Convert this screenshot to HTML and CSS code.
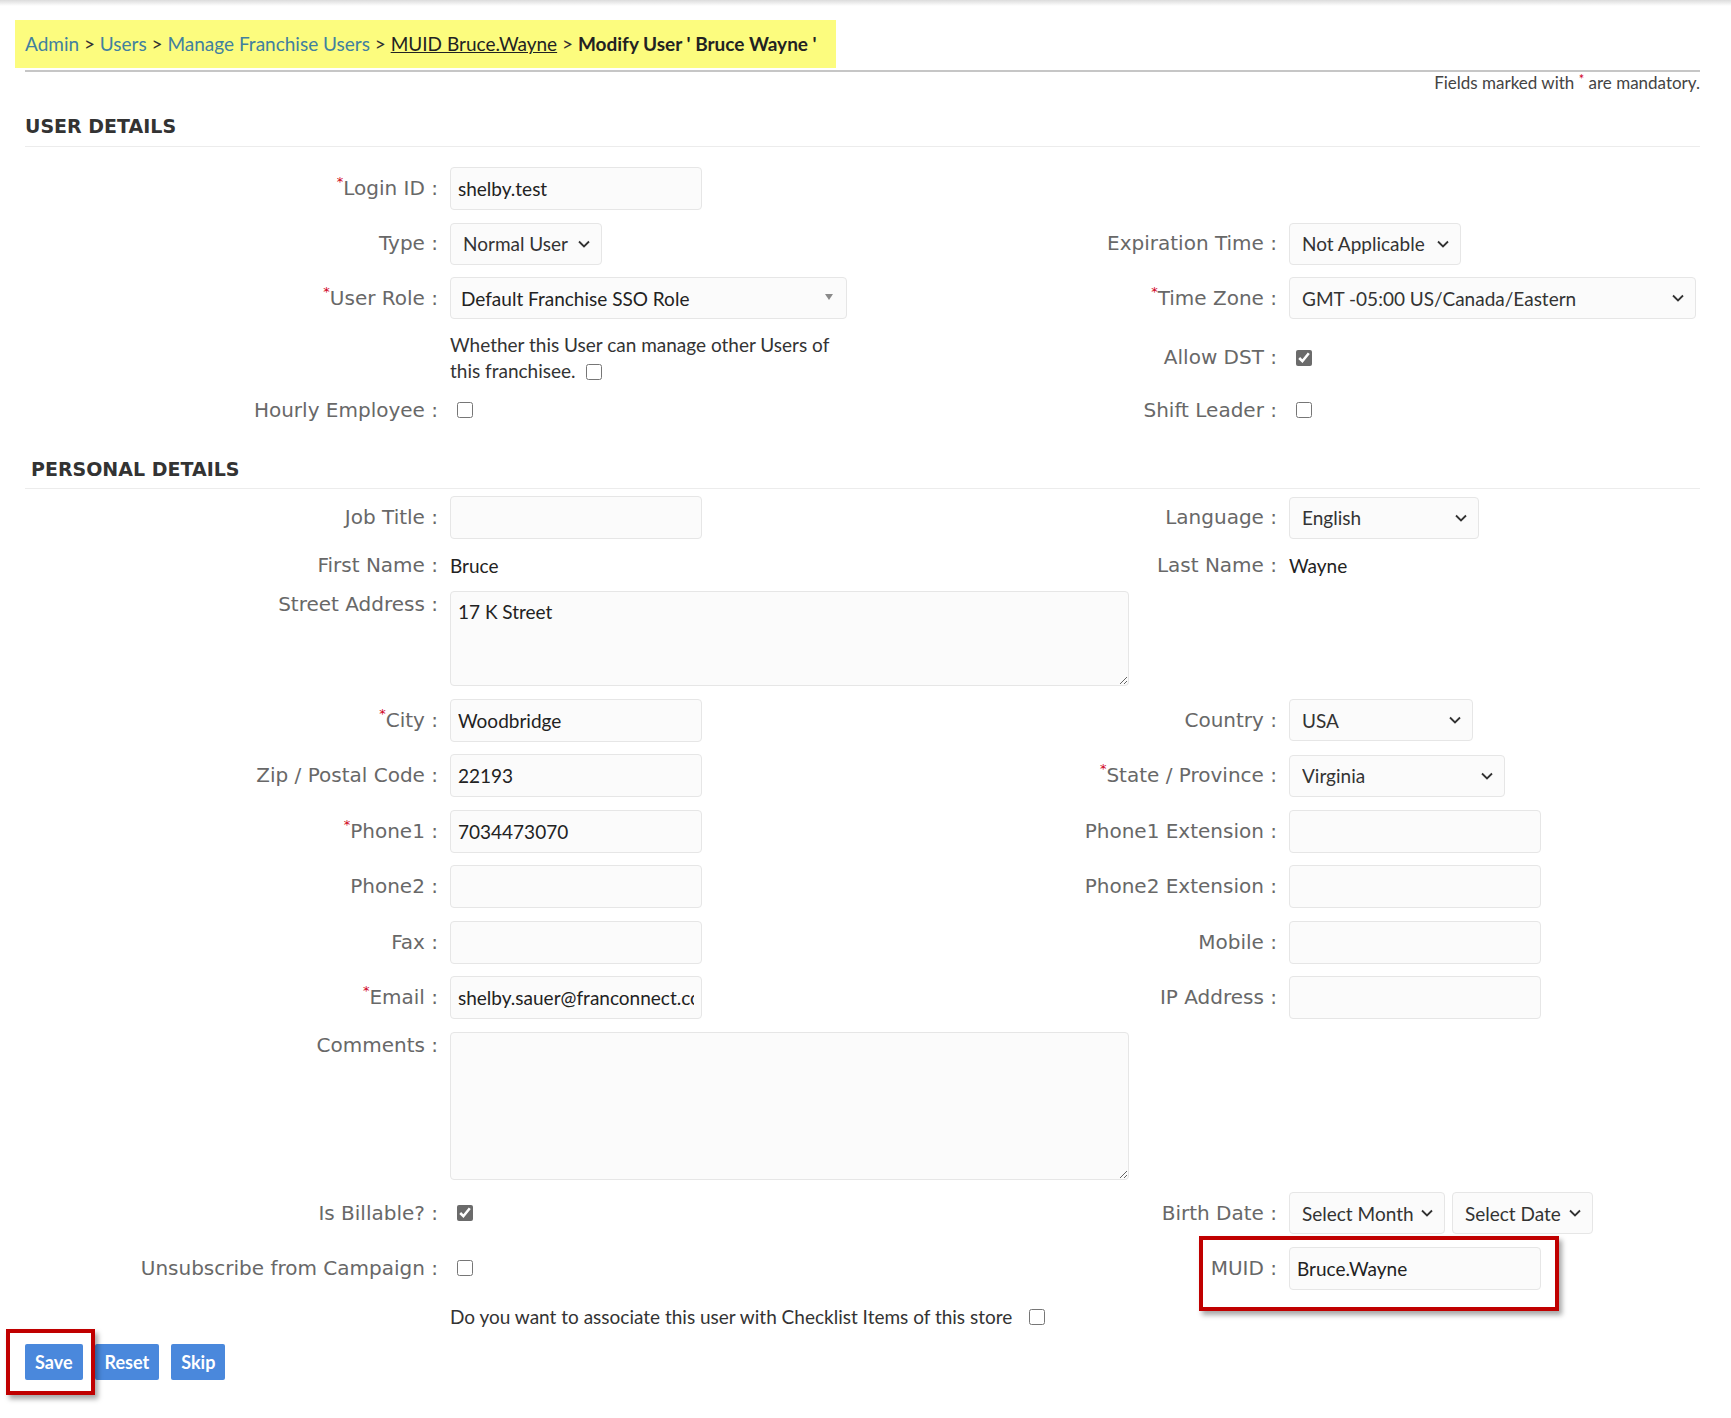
FILE: index.html
```html
<!DOCTYPE html>
<html lang="en">
<head>
<meta charset="UTF-8">
<meta name="viewport" content="width=device-width, initial-scale=1.0">
<title>Modify User</title>
<link rel="stylesheet" href="styles.css">
</head>
<body>
<div class="top-shade"></div>

<div class="breadcrumb">
    <a href="#">Admin</a> &gt; <a href="#">Users</a> &gt; <a href="#">Manage Franchise Users</a> &gt;
    <a href="#" class="muid-link">MUID Bruce.Wayne</a> &gt; <b>Modify User ' Bruce Wayne '</b>
</div>
<div class="crumb-rule"></div>
<p class="mandatory">Fields marked with <span class="req">*</span> are mandatory.</p>

<h3 class="section-title">USER DETAILS</h3>
<div class="form-grid user-grid">
    <label class="lbl first"><span class="req">*</span>Login ID :</label>
    <div class="field"><input type="text" class="txt" value="shelby.test"></div>

    <label class="lbl first">Type :</label>
    <div class="field"><select class="sel w-type"><option>Normal User</option></select></div>
    <label class="lbl">Expiration Time :</label>
    <div class="field"><select class="sel w-exp"><option>Not Applicable</option></select></div>

    <label class="lbl first"><span class="req">*</span>User Role :</label>
    <div class="field">
        <span class="chosen">
            <select class="sel plain w-role"><option>Default Franchise SSO Role</option></select>
            <svg class="tri" width="8" height="6" viewBox="0 0 8 6"><path d="M0 0 L8 0 L4 6 Z" fill="#8a8a8a"/></svg>
        </span>
    </div>
    <label class="lbl"><span class="req">*</span>Time Zone :</label>
    <div class="field"><select class="sel w-tz"><option>GMT -05:00 US/Canada/Eastern</option></select></div>

    <div class="note">Whether this User can manage other Users of<br>this franchisee. <input type="checkbox" class="cb"></div>
    <label class="lbl">Allow DST :</label>
    <div class="field"><input type="checkbox" class="cb" checked></div>

    <label class="lbl first short">Hourly Employee :</label>
    <div class="field"><input type="checkbox" class="cb"></div>
    <label class="lbl short">Shift Leader :</label>
    <div class="field"><input type="checkbox" class="cb"></div>
</div>

<h3 class="section-title personal">PERSONAL DETAILS</h3>
<div class="form-grid personal-grid">
    <label class="lbl first">Job Title :</label>
    <div class="field"><input type="text" class="txt" value=""></div>
    <label class="lbl">Language :</label>
    <div class="field"><select class="sel w-lang"><option>English</option></select></div>

    <label class="lbl first">First Name :</label>
    <div class="value">Bruce</div>
    <label class="lbl">Last Name :</label>
    <div class="value">Wayne</div>

    <label class="lbl first top">Street Address :</label>
    <div class="field span2"><textarea class="area street">17 K Street</textarea></div>

    <label class="lbl first"><span class="req">*</span>City :</label>
    <div class="field"><input type="text" class="txt" value="Woodbridge"></div>
    <label class="lbl">Country :</label>
    <div class="field"><select class="sel w-country"><option>USA</option></select></div>

    <label class="lbl first">Zip / Postal Code :</label>
    <div class="field"><input type="text" class="txt" value="22193"></div>
    <label class="lbl"><span class="req">*</span>State / Province :</label>
    <div class="field"><select class="sel w-state"><option>Virginia</option></select></div>

    <label class="lbl first"><span class="req">*</span>Phone1 :</label>
    <div class="field"><input type="text" class="txt" value="7034473070"></div>
    <label class="lbl">Phone1 Extension :</label>
    <div class="field"><input type="text" class="txt" value=""></div>

    <label class="lbl first">Phone2 :</label>
    <div class="field"><input type="text" class="txt" value=""></div>
    <label class="lbl">Phone2 Extension :</label>
    <div class="field"><input type="text" class="txt" value=""></div>

    <label class="lbl first">Fax :</label>
    <div class="field"><input type="text" class="txt" value=""></div>
    <label class="lbl">Mobile :</label>
    <div class="field"><input type="text" class="txt" value=""></div>

    <label class="lbl first"><span class="req">*</span>Email :</label>
    <div class="field"><input type="text" class="txt" value="shelby.sauer@franconnect.com"></div>
    <label class="lbl">IP Address :</label>
    <div class="field"><input type="text" class="txt" value=""></div>

    <label class="lbl first top">Comments :</label>
    <div class="field span2"><textarea class="area comments"></textarea></div>

    <label class="lbl first">Is Billable? :</label>
    <div class="field"><input type="checkbox" class="cb" checked></div>
    <label class="lbl">Birth Date :</label>
    <div class="field dates">
        <select class="sel w-month"><option>Select Month</option></select>
        <select class="sel w-date"><option>Select Date</option></select>
    </div>

    <label class="lbl first">Unsubscribe from Campaign :</label>
    <div class="field"><input type="checkbox" class="cb"></div>
    <label class="lbl">MUID :</label>
    <div class="field muid">
        <input type="text" class="txt" value="Bruce.Wayne">
        <div class="callout muid-callout"></div>
    </div>

    <div class="checklist">Do you want to associate this user with Checklist Items of this store <input type="checkbox" class="cb"></div>
</div>

<div class="actions">
    <div class="callout save-callout"></div>
    <button class="btn">Save</button>
    <button class="btn">Reset</button>
    <button class="btn">Skip</button>
</div>
</body>
</html>
```

FILE: styles.css
```css
body {
    margin: 0;
    padding-bottom: 40px;
    background: #fff;
    font-family: Lato, "Liberation Sans", sans-serif;
    color: #222;
}
.top-shade {
    height: 6px;
    background: linear-gradient(#dcdcdc, #fff);
}

/* breadcrumb */
.breadcrumb {
    display: inline-block;
    margin: 14px 0 0 15px;
    padding: 0 19px 0 10px;
    height: 48px;
    line-height: 48px;
    background: #fcfc7e;
    font-size: 19px;
    color: #333;
}
.breadcrumb a {
    color: #41809f;
    text-decoration: none;
}
.breadcrumb a.muid-link {
    color: #222;
    text-decoration: underline;
}
.breadcrumb b {
    color: #222;
}
.crumb-rule {
    margin: 2px 31px 0 25px;
    border-top: 2px solid #c6c6c6;
}
.mandatory {
    margin: 1px 31px 0 0;
    text-align: right;
    font-size: 17px;
    line-height: 20px;
    color: #444;
}
.req {
    color: #d0021b;
    font-size: 13px;
    vertical-align: top;
    line-height: 1;
}

/* sections */
.section-title {
    margin: 21px 31px 0 25px;
    padding-bottom: 8px;
    border-bottom: 1px solid #ececec;
    font-family: "DejaVu Sans", sans-serif;
    font-size: 19px;
    line-height: 24px;
    font-weight: 700;
    color: #333;
}
.section-title.personal {
    margin-top: 33px;
    padding-left: 6px;
    padding-bottom: 7px;
}

.form-grid {
    display: grid;
    grid-template-columns: 413px 415px 400px 1fr;
    column-gap: 12px;
    row-gap: 12.5px;
    align-items: center;
    margin: 20px 31px 0 25px;
}
.personal-grid {
    margin-top: 7px;
}
.lbl {
    text-align: right;
    font-family: "DejaVu Sans", sans-serif;
    font-size: 20px;
    line-height: 27px;
    color: #686868;
    white-space: nowrap;
}
.lbl.first {
    grid-column: 1;
}
.lbl.short {
    line-height: 28px;
}
.lbl.top {
    align-self: start;
}
.field {
    display: flex;
    align-items: center;
}
.span2 {
    grid-column: span 2;
}
.value {
    font-size: 19px;
    line-height: 27px;
    color: #222;
}
.note {
    grid-column: 2;
    font-size: 19px;
    line-height: 26px;
    color: #333;
}
.note .cb {
    margin-left: 6px;
    vertical-align: -2px;
}
.checklist {
    grid-column: 2 / 5;
    font-size: 19px;
    line-height: 29px;
    color: #333;
}
.checklist .cb {
    margin-left: 12px;
    vertical-align: -1px;
}

/* controls */
.txt, .sel, .area {
    box-sizing: border-box;
    background-color: #fbfbfb;
    border: 1px solid #e6e6e6;
    border-radius: 4px;
    font-family: Lato, "Liberation Sans", sans-serif;
    font-size: 19px;
    color: #222;
}
.txt {
    width: 252px;
    height: 43px;
    padding: 0 7px;
}
.sel {
    height: 42px;
    padding: 0 30px 0 12px;
    appearance: none;
    color: #333;
    background-image: url("data:image/svg+xml,%3Csvg xmlns='http://www.w3.org/2000/svg' width='12' height='8' viewBox='0 0 12 8'%3E%3Cpath d='M1 1.5 L6 6.5 L11 1.5' fill='none' stroke='%23333' stroke-width='1.8'/%3E%3C/svg%3E");
    background-repeat: no-repeat;
    background-position: right 11px center;
}
.area {
    width: 679px;
    padding: 8px 7px;
    resize: vertical;
}
.area.street {
    height: 95px;
}
.area.comments {
    height: 148px;
}
.w-type { width: 152px; }
.w-exp { width: 172px; }
.w-role { width: 397px; }
.w-tz { width: 407px; }
.w-lang { width: 190px; }
.w-country { width: 184px; }
.w-state { width: 216px; }
.w-month { width: 156px; }
.w-date { width: 141px; }
.dates {
    gap: 7px;
}
.chosen {
    position: relative;
    display: inline-block;
}
.sel.plain {
    background-image: none;
    padding-left: 10px;
    color: #222;
}
.chosen .tri {
    position: absolute;
    right: 14px;
    top: 17px;
}
.cb {
    width: 16px;
    height: 16px;
    margin: 0 0 0 7px;
    accent-color: #6b6b6b;
}

/* annotations */
.muid {
    position: relative;
}
.callout {
    position: absolute;
    box-sizing: border-box;
    border: 4px solid #c00000;
    box-shadow: 3px 4px 5px rgba(0,0,0,0.35);
    pointer-events: none;
}
.muid-callout {
    left: -90px;
    top: -11px;
    width: 360px;
    height: 75px;
}

/* buttons */
.actions {
    position: relative;
    display: flex;
    gap: 12px;
    margin-top: 13px;
    padding-left: 25px;
}
.btn {
    height: 36px;
    padding: 0 10px;
    border: none;
    border-radius: 2px;
    background: #4a88dc;
    color: #fff;
    font-family: Lato, "Liberation Sans", sans-serif;
    font-size: 18px;
    font-weight: 700;
    cursor: pointer;
}
.save-callout {
    left: 6px;
    top: -15px;
    width: 89px;
    height: 66px;
}
```
